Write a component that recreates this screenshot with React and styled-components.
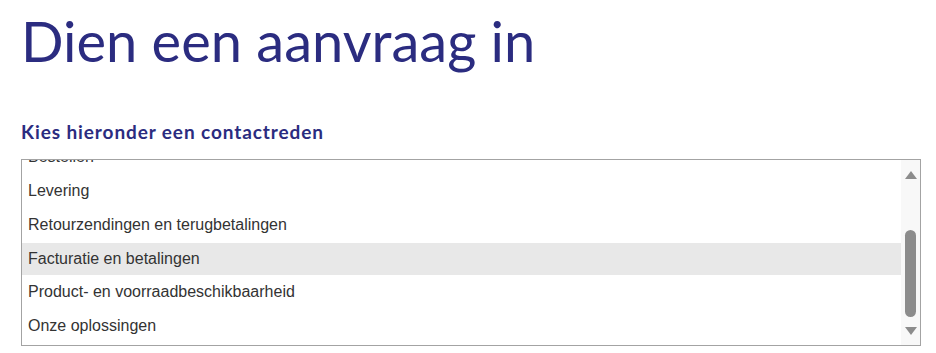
import React, { useLayoutEffect, useRef } from "react";
import styled, { createGlobalStyle } from "styled-components";

const reasons = [
  "Maak een keuze",
  "Algemene vragen",
  "Mijn account",
  "Bestellen",
  "Levering",
  "Retourzendingen en terugbetalingen",
  "Facturatie en betalingen",
  "Product- en voorraadbeschikbaarheid",
  "Onze oplossingen",
];

const hovered = "Facturatie en betalingen";

export default function App() {
  const listRef = useRef(null);

  // the list is shown scrolled all the way down
  useLayoutEffect(() => {
    const el = listRef.current;
    if (el) el.scrollTop = el.scrollHeight;
  }, []);

  return (
    <Page>
      <GlobalStyle />
      <Title>Dien een aanvraag in</Title>
      <Label>Kies hieronder een contactreden</Label>
      <ListBox>
        <Options ref={listRef}>
          {reasons.map((r) => (
            <Option key={r} $active={r === hovered}>
              {r}
            </Option>
          ))}
          <Spacer />
        </Options>
        <ScrollBar>
          <Arrow $dir="up" />
          <Track>
            <Thumb />
          </Track>
          <Arrow $dir="down" />
        </ScrollBar>
      </ListBox>
    </Page>
  );
}

const GlobalStyle = createGlobalStyle`
  html, body {
    margin: 0;
    padding: 0;
    background: #fff;
  }
`;

const Page = styled.div`
  padding: 7px 16px 0 21px;
  font-family: "Lato", "Liberation Sans", sans-serif;
`;

const Title = styled.h1`
  margin: 0;
  font-weight: 400;
  font-size: 56px;
  line-height: 68px;
  color: #2b2c80;
`;

const Label = styled.h2`
  margin: 45px 0 16px;
  font-weight: 700;
  font-size: 19px;
  line-height: 23px;
  letter-spacing: 0.9px;
  color: #2b2c80;
`;

const ListBox = styled.div`
  display: flex;
  width: 898px;
  height: 185px;
  border: 1px solid #a3a3a3;
  background: #fff;
`;

const Options = styled.div`
  flex: 1;
  overflow: hidden;
  display: flex;
  flex-direction: column;
  gap: 1.75px;
`;

const Spacer = styled.div`
  flex: none;
  height: 1.5px;
`;

const Option = styled.div`
  flex: none;
  height: 32px;
  line-height: 32px;
  padding: 0 6px;
  font-family: "Liberation Sans", Arial, sans-serif;
  font-size: 16px;
  color: #333;
  white-space: nowrap;
  background: ${(p) => (p.$active ? "#e8e8e8" : "transparent")};
`;

const ScrollBar = styled.div`
  flex: none;
  width: 19px;
  display: flex;
  flex-direction: column;
  align-items: center;
  background: #f8f8f8;
`;

const Arrow = styled.div`
  flex: none;
  width: 0;
  height: 0;
  margin: ${(p) => (p.$dir === "up" ? "11px 0 0" : "0 0 10px")};
  border-left: 6px solid transparent;
  border-right: 6px solid transparent;
  ${(p) =>
    p.$dir === "up"
      ? "border-bottom: 8px solid #8c8c8c;"
      : "border-top: 8px solid #8c8c8c;"}
`;

const Track = styled.div`
  flex: 1;
  display: flex;
  flex-direction: column;
  justify-content: flex-end;
  padding-bottom: 10px;
`;

const Thumb = styled.div`
  width: 11px;
  height: 87px;
  border-radius: 6px;
  background: #8c8c8c;
`;
